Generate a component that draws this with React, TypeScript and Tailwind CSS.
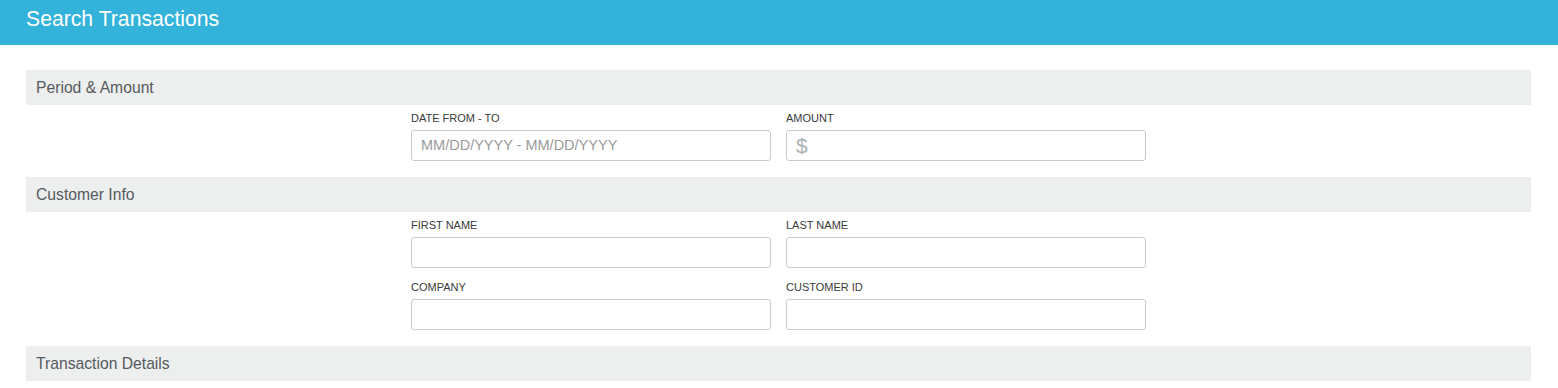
function Field({ label, placeholder, prefix }: { label: string; placeholder?: string; prefix?: string }) {
  return (
    <div className="flex flex-col w-[360px]">
      <label className="text-[11px] leading-[15px] text-[#3a3a3a] mb-[4px]">{label}</label>
      <div className="flex items-center h-[31px] rounded-[3px] border border-[#cbcbcb] bg-white px-[9px]">
        {prefix && <span className="text-[21px] text-[#a9b1b5] mr-1 leading-none">{prefix}</span>}
        <input
          className="flex-1 min-w-0 bg-transparent outline-none text-[14.5px] text-[#333] placeholder:text-[#9a9a9a]"
          placeholder={placeholder}
        />
      </div>
    </div>
  )
}

function Section({ title, children }: { title: string; children?: React.ReactNode }) {
  return (
    <section>
      <div className="h-[35px] bg-[#edeeee] flex items-center px-[10px] text-[15.7px] text-[#555a5e]">{title}</div>
      {children && <div className="pl-[385px] pt-[6px] pb-4 flex flex-col gap-[12px]">{children}</div>}
    </section>
  )
}

export default function App() {
  return (
    <div className="min-h-[388px] bg-white" style={{ fontFamily: "'Liberation Sans', Arial, sans-serif" }}>
      <header className="h-[45px] bg-[#33b3d9] flex items-center px-[26px]">
        <h1 className="text-[21.2px] text-white -mt-[7px]">Search Transactions</h1>
      </header>

      <main className="mx-[26px] mt-[25px] w-[1505px]">
        <Section title="Period & Amount">
          <div className="flex gap-[15px]">
            <Field label="DATE FROM - TO" placeholder="MM/DD/YYYY - MM/DD/YYYY" />
            <Field label="AMOUNT" prefix="$" />
          </div>
        </Section>
        <Section title="Customer Info">
          <div className="flex gap-[15px]">
            <Field label="FIRST NAME" />
            <Field label="LAST NAME" />
          </div>
          <div className="flex gap-[15px]">
            <Field label="COMPANY" />
            <Field label="CUSTOMER ID" />
          </div>
        </Section>
        <Section title="Transaction Details" />
      </main>
    </div>
  )
}
